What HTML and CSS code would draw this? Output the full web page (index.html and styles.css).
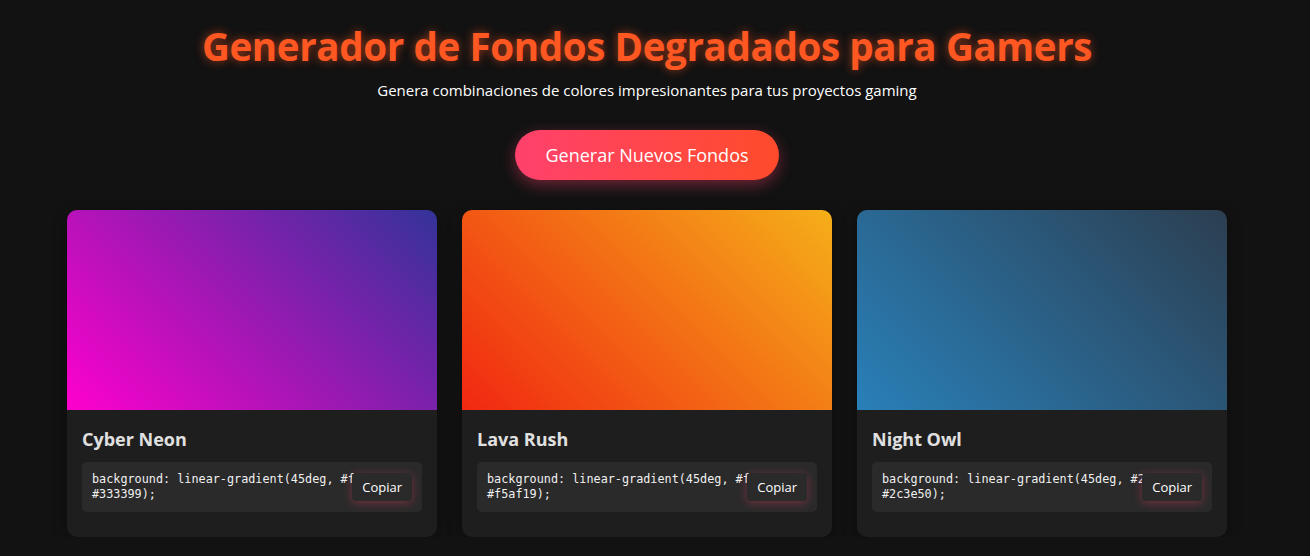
FILE: index.html
```html
<!DOCTYPE html>
<html lang="es">
<head>
<meta charset="utf-8">
<title>Generador de Fondos Degradados para Gamers</title>
<link rel="stylesheet" href="styles.css">
</head>
<body>
<div class="page">
  <header class="hero">
    <h1 class="title">Generador de Fondos Degradados para Gamers</h1>
    <p class="subtitle">Genera combinaciones de colores impresionantes para tus proyectos gaming</p>
    <button class="generate">Generar Nuevos Fondos</button>
  </header>
  <main class="grid">
    <div class="card">
      <div class="preview" style="background: linear-gradient(45deg, #ff00cc, #333399);"></div>
      <div class="info">
        <h3 class="name">Cyber Neon</h3>
        <div class="code">
          <code>background: linear-gradient(45deg, #ff00cc, #333399);</code>
          <button class="copy">Copiar</button>
        </div>
      </div>
    </div>
    <div class="card">
      <div class="preview" style="background: linear-gradient(45deg, #f12711, #f5af19);"></div>
      <div class="info">
        <h3 class="name">Lava Rush</h3>
        <div class="code">
          <code>background: linear-gradient(45deg, #f12711, #f5af19);</code>
          <button class="copy">Copiar</button>
        </div>
      </div>
    </div>
    <div class="card">
      <div class="preview" style="background: linear-gradient(45deg, #2980b9, #2c3e50);"></div>
      <div class="info">
        <h3 class="name">Night Owl</h3>
        <div class="code">
          <code>background: linear-gradient(45deg, #2980b9, #2c3e50);</code>
          <button class="copy">Copiar</button>
        </div>
      </div>
    </div>
  </main>
</div>
</body>
</html>
```
FILE: styles.css
```css
* { box-sizing: border-box; }
html, body { margin: 0; padding: 0; }
body {
  background: #121212;
  color: #e0e0e0;
  font-family: "Open Sans", "Noto Sans", sans-serif;
  padding-right: 16px;
}
.page {
  max-width: 1160px;
  margin: 0 auto;
}
.hero {
  display: flex;
  flex-direction: column;
  align-items: center;
  padding-top: 21px;
}
.title {
  margin: 0;
  font-size: 38.6px;
  font-weight: 700;
  line-height: 50px;
  color: #ff5722;
  text-shadow: 0 0 10px rgba(255, 87, 34, 0.6);
  letter-spacing: -0.4px;
}
.subtitle {
  margin: 8px 0 0;
  font-size: 15px;
  line-height: 22px;
  color: #ffffff;
}
.generate {
  margin-top: 29px;
  height: 50px;
  padding: 0 30px;
  border: none;
  border-radius: 25px;
  background: linear-gradient(90deg, #ff416c, #ff4b2b);
  color: #ffffff;
  font-family: inherit;
  font-size: 18px;
  box-shadow: 0 5px 15px rgba(255, 65, 108, 0.4);
  cursor: pointer;
}
.grid {
  margin-top: 30px;
  display: grid;
  grid-template-columns: repeat(3, 1fr);
  gap: 25px;
}
.card {
  background: #1e1e1e;
  border-radius: 10px;
  overflow: hidden;
  box-shadow: 0 4px 15px rgba(0, 0, 0, 0.3);
}
.preview {
  height: 200px;
}
.info {
  padding: 15px 15px 25px;
}
.name {
  margin: 0 0 9px;
  font-size: 18px;
  line-height: 28px;
  font-weight: 700;
  color: #e0e0e0;
}
.code {
  position: relative;
  background: #2a2a2a;
  border-radius: 5px;
  padding: 10px;
}
.code code {
  display: block;
  font-family: "DejaVu Sans Mono", "Liberation Mono", monospace;
  font-size: 11.8px;
  line-height: 15px;
  color: #f0f0f0;
  word-break: break-word;
}
.copy {
  position: absolute;
  right: 10px;
  top: 50%;
  transform: translateY(-50%);
  background: #2a2a2a;
  color: #ffffff;
  border: none;
  border-radius: 4px;
  padding: 5px 10px;
  font-family: inherit;
  font-size: 13px;
  box-shadow: 0 2px 10px rgba(255, 65, 108, 0.35);
}
```
